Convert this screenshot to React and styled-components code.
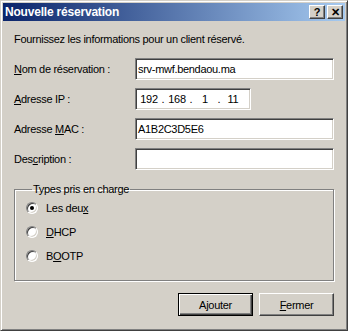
import styled, { createGlobalStyle } from "styled-components";

const GlobalStyle = createGlobalStyle`
    html, body {
        margin: 0;
        padding: 0;
        background: #d4d0c8;
    }
    body {
        font-family: "Liberation Sans", Arial, sans-serif;
        font-size: 11px;
        letter-spacing: -0.3px;
        color: #000;
    }
`;

const Window = styled.div`
    box-sizing: border-box;
    width: 348px;
    height: 331px;
    background: #d4d0c8;
    border: 1px solid;
    border-color: #d4d0c8 #404040 #404040 #d4d0c8;
    box-shadow: inset 1px 1px #fff, inset -1px -1px #808080;
    padding: 2px;
    display: flex;
    flex-direction: column;
`;

const TitleBar = styled.div`
    height: 18px;
    background: linear-gradient(to right, #0a246a, #a6caf0);
    display: flex;
    align-items: center;
    justify-content: space-between;
    padding: 0 2px 0 2px;
`;

const Title = styled.span`
    color: #fff;
    font-weight: bold;
    font-size: 12px;
    letter-spacing: -0.2px;
`;

const TitleButtons = styled.div`
    display: flex;
    gap: 2px;
`;

const TitleButton = styled.div`
    box-sizing: border-box;
    width: 16px;
    height: 14px;
    background: #d4d0c8;
    border: 1px solid;
    border-color: #fff #404040 #404040 #fff;
    box-shadow: inset -1px -1px #808080;
    display: flex;
    align-items: center;
    justify-content: center;
    font-weight: bold;
    font-size: 11px;
    line-height: 1;
    letter-spacing: 0;
`;

const Body = styled.div`
    flex: 1;
    padding: 10px 11px 0 11px;
    display: flex;
    flex-direction: column;
`;

const Intro = styled.div`
    height: 17px;
    line-height: 17px;
    margin-bottom: 10px;
`;

const Row = styled.div`
    display: grid;
    grid-template-columns: 121px 1fr;
    align-items: center;
    height: 22px;
    margin-bottom: 8px;
`;

const Field = styled.div`
    box-sizing: border-box;
    height: 22px;
    width: ${(p) => p.$width || "199px"};
    background: #fff;
    border: 1px solid;
    border-color: #808080 #fff #fff #808080;
    box-shadow: inset 1px 1px #404040, inset -1px -1px #d4d0c8;
    padding: 0 2px;
    display: flex;
    align-items: center;
`;

const IpPart = styled.span`
    width: 22px;
    text-align: center;
`;

const IpDot = styled.span`
    width: 6px;
    text-align: center;
`;

const GroupBox = styled.fieldset`
    margin: 5px 0 0 0;
    padding: 4px 0 16px 11px;
    width: 320px;
    box-sizing: border-box;
    border: 1px solid #808080;
    box-shadow: 1px 1px #fff, inset 1px 1px #fff;
    display: flex;
    flex-direction: column;
    gap: 6px;
`;

const Legend = styled.legend`
    padding: 0 1px;
    margin-left: 6px;
`;

const RadioRow = styled.div`
    display: flex;
    align-items: center;
    gap: 8px;
    height: 16px;
    margin-top: ${(p) => (p.$first ? "1px" : "2px")};
`;

const Radio = styled.span`
    box-sizing: border-box;
    width: 12px;
    height: 12px;
    border-radius: 50%;
    background: #fff;
    border: 1px solid;
    border-color: #808080 #fff #fff #808080;
    box-shadow: inset 1px 1px #404040, inset -1px -1px #d4d0c8;
    display: flex;
    align-items: center;
    justify-content: center;
    &::after {
        content: "";
        width: 4px;
        height: 4px;
        border-radius: 50%;
        background: ${(p) => (p.$checked ? "#000" : "transparent")};
    }
`;

const Buttons = styled.div`
    display: flex;
    justify-content: flex-end;
    gap: 6px;
    margin-top: 12px;
    width: 320px;
`;

const Button = styled.div`
    box-sizing: border-box;
    width: 75px;
    height: 23px;
    background: #d4d0c8;
    border: 1px solid;
    border-color: ${(p) =>
        p.$default ? "#000" : "#fff #404040 #404040 #fff"};
    box-shadow: ${(p) =>
        p.$default
            ? "inset 1px 1px #fff, inset -1px -1px #404040, inset -2px -2px #808080"
            : "inset -1px -1px #808080"};
    display: flex;
    align-items: center;
    justify-content: center;
`;

const App = () => {
    return (
        <>
            <GlobalStyle />
            <Window>
                <TitleBar>
                    <Title>Nouvelle réservation</Title>
                    <TitleButtons>
                        <TitleButton>?</TitleButton>
                        <TitleButton>✕</TitleButton>
                    </TitleButtons>
                </TitleBar>
                <Body>
                    <Intro>Fournissez les informations pour un client réservé.</Intro>
                    <Row>
                        <span><u>N</u>om de réservation :</span>
                        <Field>srv-mwf.bendaou.ma</Field>
                    </Row>
                    <Row>
                        <span><u>A</u>dresse IP :</span>
                        <Field $width="116px">
                            <IpPart>192</IpPart><IpDot>.</IpDot>
                            <IpPart>168</IpPart><IpDot>.</IpDot>
                            <IpPart>1</IpPart><IpDot>.</IpDot>
                            <IpPart>11</IpPart>
                        </Field>
                    </Row>
                    <Row>
                        <span>Adresse <u>M</u>AC :</span>
                        <Field>A1B2C3D5E6</Field>
                    </Row>
                    <Row>
                        <span>Des<u>c</u>ription :</span>
                        <Field />
                    </Row>
                    <GroupBox>
                        <Legend>Types pris en charge</Legend>
                        <RadioRow $first>
                            <Radio $checked />
                            <span>Les deu<u>x</u></span>
                        </RadioRow>
                        <RadioRow>
                            <Radio />
                            <span><u>D</u>HCP</span>
                        </RadioRow>
                        <RadioRow>
                            <Radio />
                            <span>B<u>O</u>OTP</span>
                        </RadioRow>
                    </GroupBox>
                    <Buttons>
                        <Button $default>A<u>j</u>outer</Button>
                        <Button><u>F</u>ermer</Button>
                    </Buttons>
                </Body>
            </Window>
        </>
    );
};

export default App;
